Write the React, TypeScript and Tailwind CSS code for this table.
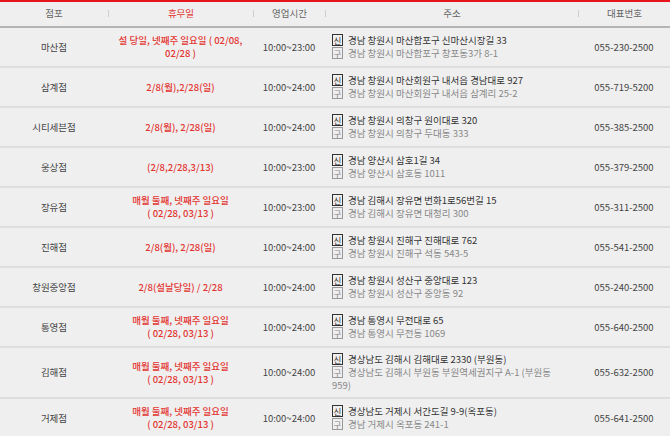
import React from 'react';

interface Store {
  name: string;
  holiday: string[];
  hours: string;
  newAddr: string;
  oldAddr: string;
  phone: string;
}

const MONTHLY = ['매월 둘째, 넷째주 일요일', '( 02/28, 03/13 )'];

const stores: Store[] = [
  { name: '마산점', holiday: ['설 당일, 넷째주 일요일 ( 02/08,', '02/28 )'], hours: '10:00~23:00', newAddr: '경남 창원시 마산합포구 신마산시장길 33', oldAddr: '경남 창원시 마산합포구 창포동3가 8-1', phone: '055-230-2500' },
  { name: '삼계점', holiday: ['2/8(월),2/28(일)'], hours: '10:00~24:00', newAddr: '경남 창원시 마산회원구 내서읍 경남대로 927', oldAddr: '경남 창원시 마산회원구 내서읍 삼계리 25-2', phone: '055-719-5200' },
  { name: '시티세븐점', holiday: ['2/8(월), 2/28(일)'], hours: '10:00~24:00', newAddr: '경남 창원시 의창구 원이대로 320', oldAddr: '경남 창원시 의창구 두대동 333', phone: '055-385-2500' },
  { name: '웅상점', holiday: ['(2/8,2/28,3/13)'], hours: '10:00~23:00', newAddr: '경남 양산시 삼호1길 34', oldAddr: '경남 양산시 삼호동 1011', phone: '055-379-2500' },
  { name: '장유점', holiday: MONTHLY, hours: '10:00~23:00', newAddr: '경남 김해시 장유면 번화1로56번길 15', oldAddr: '경남 김해시 장유면 대청리 300', phone: '055-311-2500' },
  { name: '진해점', holiday: ['2/8(월), 2/28(일)'], hours: '10:00~24:00', newAddr: '경남 창원시 진해구 진해대로 762', oldAddr: '경남 창원시 진해구 석동 543-5', phone: '055-541-2500' },
  { name: '창원중앙점', holiday: ['2/8(설날당일) / 2/28'], hours: '10:00~24:00', newAddr: '경남 창원시 성산구 중앙대로 123', oldAddr: '경남 창원시 성산구 중앙동 92', phone: '055-240-2500' },
  { name: '통영점', holiday: MONTHLY, hours: '10:00~24:00', newAddr: '경남 통영시 무전대로 65', oldAddr: '경남 통영시 무전동 1069', phone: '055-640-2500' },
  { name: '김해점', holiday: MONTHLY, hours: '10:00~24:00', newAddr: '경상남도 김해시 김해대로 2330 (부원동)', oldAddr: '경상남도 김해시 부원동 부원역세권지구 A-1 (부원동 959)', phone: '055-632-2500' },
  { name: '거제점', holiday: MONTHLY, hours: '10:00~24:00', newAddr: '경상남도 거제시 서간도길 9-9(옥포동)', oldAddr: '경남 거제시 옥포동 241-1', phone: '055-641-2500' },
];

const COLS = 'grid grid-cols-[108px_145px_72px_253px_92px]';

const HeadCell = ({ label, red, first }: { label: string; red?: boolean; first?: boolean }) => (
  <div className="flex items-center">
    {!first && <div className="w-px h-[7px] bg-[#cfcfcf]" />}
    <div className={`flex-1 text-center ${red ? 'text-[#e3342f]' : 'text-[#666]'}`}>{label}</div>
  </div>
);

const Tag = ({ label, old }: { label: string; old?: boolean }) => (
  <span className={`inline-flex items-center justify-center align-top w-[11px] h-[12px] mr-[5px] border text-[8.5px] leading-none ${old ? 'border-[#999] text-[#888]' : 'border-[#333] text-[#333]'}`}>
    {label}
  </span>
);

export default function App() {
  return (
    <div className="w-[670px] h-[436px] overflow-hidden bg-[#efefef] border-t-2 border-[#e8141b] text-[9.5px] leading-[13px]" style={{ fontFamily: '"Noto Sans CJK KR", "Noto Sans", sans-serif' }}>
      <div className={`${COLS} h-[26px] border-b-2 border-[#b4b4b4] pb-[1px]`}>
        <HeadCell label="점포" first />
        <HeadCell label="휴무일" red />
        <HeadCell label="영업시간" />
        <HeadCell label="주소" />
        <HeadCell label="대표번호" />
      </div>
      {stores.map((s) => (
        <div key={s.name} className={`${COLS} border-b-2 border-[#dedede] min-h-[40px]`}>
          <div className="flex items-center justify-center text-[#444]">{s.name}</div>
          <div className="flex flex-col items-center justify-center text-center font-medium text-[#e3342f]">
            {s.holiday.map((line) => <div key={line}>{line}</div>)}
          </div>
          <div className="flex items-center justify-center text-[#444]">{s.hours}</div>
          <div className="flex flex-col justify-center py-[5px] pl-[7px] pr-[14px]">
            <div className="text-[#333]"><Tag label="신" />{s.newAddr}</div>
            <div className="text-[#888]"><Tag label="구" old />{s.oldAddr}</div>
          </div>
          <div className="flex items-center justify-center text-[#444]">{s.phone}</div>
        </div>
      ))}
    </div>
  );
}
